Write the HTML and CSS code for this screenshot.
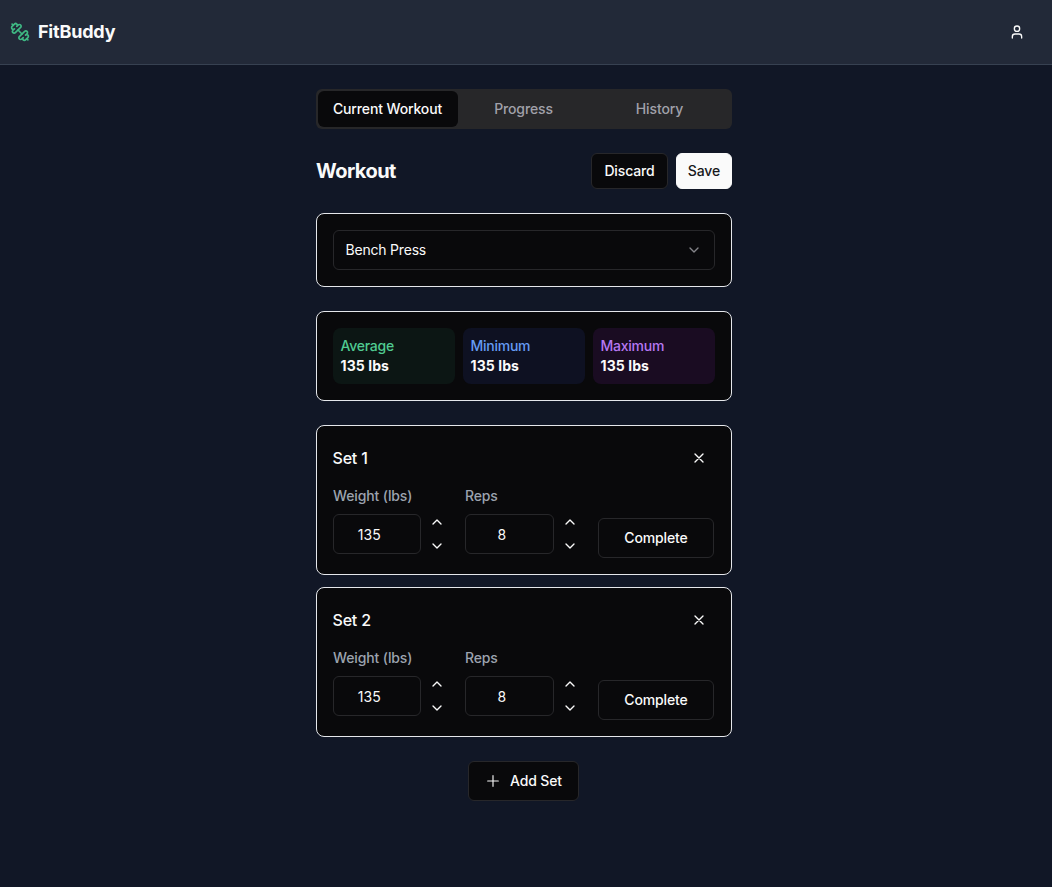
FILE: index.html
```html
<!DOCTYPE html>
<html lang="en">
<head>
<meta charset="utf-8">
<title>FitBuddy</title>
<link rel="stylesheet" href="styles.css">
</head>
<body>
<svg class="sprite" aria-hidden="true">
  <symbol id="up" viewBox="0 0 24 24"><path d="m18 15-6-6-6 6"/></symbol>
  <symbol id="down" viewBox="0 0 24 24"><path d="m6 9 6 6 6-6"/></symbol>
  <symbol id="close" viewBox="0 0 24 24"><path d="M18 6 6 18M6 6l12 12"/></symbol>
</svg>
<header class="header">
  <div class="brand">
    <svg class="logo" viewBox="0 0 24 24"><path d="M14.4 14.4 9.6 9.6"/><path d="M18.657 21.485a2 2 0 1 1-2.829-2.828l-1.767 1.768a2 2 0 1 1-2.829-2.829l6.364-6.364a2 2 0 1 1 2.829 2.829l-1.768 1.767a2 2 0 1 1 2.828 2.829z"/><path d="m21.5 21.5-1.4-1.4"/><path d="M3.9 3.9 2.5 2.5"/><path d="M6.404 12.768a2 2 0 1 1-2.829-2.829l1.768-1.767a2 2 0 1 1-2.828-2.829l2.828-2.828a2 2 0 1 1 2.829 2.828l1.767-1.768a2 2 0 1 1 2.829 2.829z"/></svg>
    <span>FitBuddy</span>
  </div>
  <svg class="icon" viewBox="0 0 24 24"><path d="M19 21v-2a4 4 0 0 0-4-4H9a4 4 0 0 0-4 4v2"/><circle cx="12" cy="7" r="4"/></svg>
</header>
<main class="main">
  <nav class="tabs">
    <button class="tab tab-active">Current Workout</button>
    <button class="tab">Progress</button>
    <button class="tab">History</button>
  </nav>
  <div class="title-row">
    <h1 class="title">Workout</h1>
    <button class="btn btn-discard">Discard</button>
    <button class="btn btn-save">Save</button>
  </div>
  <section class="card">
    <div class="select"><span>Bench Press</span><svg class="icon select-icon"><use href="#down"/></svg></div>
  </section>
  <section class="card stats">
    <div class="stat stat-green"><span class="stat-label">Average</span><strong>135 lbs</strong></div>
    <div class="stat stat-blue"><span class="stat-label">Minimum</span><strong>135 lbs</strong></div>
    <div class="stat stat-purple"><span class="stat-label">Maximum</span><strong>135 lbs</strong></div>
  </section>
  <div class="sets">
    <section class="card set">
      <div class="set-head"><h2 class="set-title">Set 1</h2><svg class="icon"><use href="#close"/></svg></div>
      <div class="set-grid">
        <div class="field"><span class="label">Weight (lbs)</span><div class="control"><div class="input">135</div><div class="stepper"><svg class="icon"><use href="#up"/></svg><svg class="icon"><use href="#down"/></svg></div></div></div>
        <div class="field"><span class="label">Reps</span><div class="control"><div class="input">8</div><div class="stepper"><svg class="icon"><use href="#up"/></svg><svg class="icon"><use href="#down"/></svg></div></div></div>
        <button class="btn btn-complete">Complete</button>
      </div>
    </section>
    <section class="card set">
      <div class="set-head"><h2 class="set-title">Set 2</h2><svg class="icon"><use href="#close"/></svg></div>
      <div class="set-grid">
        <div class="field"><span class="label">Weight (lbs)</span><div class="control"><div class="input">135</div><div class="stepper"><svg class="icon"><use href="#up"/></svg><svg class="icon"><use href="#down"/></svg></div></div></div>
        <div class="field"><span class="label">Reps</span><div class="control"><div class="input">8</div><div class="stepper"><svg class="icon"><use href="#up"/></svg><svg class="icon"><use href="#down"/></svg></div></div></div>
        <button class="btn btn-complete">Complete</button>
      </div>
    </section>
  </div>
  <button class="btn btn-add"><svg class="icon" viewBox="0 0 24 24"><path d="M4 12h16M12 4v16"/></svg>Add Set</button>
</main>
</body>
</html>
```
FILE: styles.css
```css
* { box-sizing: border-box; }
body {
  margin: 0;
  min-height: 100vh;
  background: #111726;
  color: #fafafa;
  font: 540 14px/20px Inter, "Liberation Sans", sans-serif;
  letter-spacing: -0.13px;
}
button { font: inherit; color: inherit; letter-spacing: inherit; }
.sprite { display: none; }
.icon, .logo {
  width: 16px;
  height: 16px;
  flex: none;
  fill: none;
  stroke: currentColor;
  stroke-width: 2;
  stroke-linecap: round;
  stroke-linejoin: round;
}
.header {
  display: flex;
  align-items: center;
  justify-content: space-between;
  height: 65px;
  padding: 0 27px 0 10px;
  background: #222938;
  border-bottom: 1px solid #374151;
}
.brand {
  display: flex;
  align-items: center;
  gap: 8px;
  font-size: 18px;
  line-height: 28px;
  font-weight: 700;
  letter-spacing: -0.2px;
}
.logo { width: 20px; height: 20px; color: #3fb984; }
.main {
  display: flex;
  flex-direction: column;
  gap: 24px;
  width: 416px;
  margin: 24px 0 0 316px;
}
.tabs {
  display: grid;
  grid-template-columns: repeat(3, 1fr);
  height: 40px;
  padding: 4px;
  border-radius: 6px;
  background: #272729;
}
.tab {
  padding: 0 1px 0 0;
  border: 0;
  background: none;
  color: #a1a1aa;
}
.tab-active {
  margin: -2px;
  border-radius: 6px;
  background: #09090b;
  color: #fafafa;
}
.title-row { display: flex; align-items: center; gap: 8px; height: 36px; }
.title {
  flex: 1;
  margin: 0;
  font-size: 20px;
  line-height: 28px;
  font-weight: 700;
  letter-spacing: -0.55px;
}
.btn {
  display: flex;
  align-items: center;
  justify-content: center;
  height: 40px;
  padding: 0;
  border: 1px solid #27272a;
  border-radius: 6px;
  background: #09090b;
}
.btn-discard { width: 77px; height: 36px; }
.btn-save { width: 56px; height: 36px; background: #fafafa; border-color: #fafafa; color: #18181b; }
.card {
  padding: 16px;
  border: 1px solid #e5e7eb;
  border-radius: 8px;
  background: #09090b;
}
.select {
  display: flex;
  align-items: center;
  justify-content: space-between;
  height: 40px;
  padding: 0 12px 0 11.5px;
  border: 1px solid #27272a;
  border-radius: 6px;
  font-weight: 430;
  letter-spacing: -0.2px;
}
.select-icon { color: #85858a; }
.stats { display: grid; grid-template-columns: repeat(3, 1fr); gap: 8px; }
.stat {
  display: flex;
  flex-direction: column;
  height: 56px;
  padding: 8px 8px 8px 7.5px;
  border-radius: 8px;
}
.stat-label { letter-spacing: -0.25px; }
.stat strong { font-weight: 750; letter-spacing: 0.1px; }
.stat-green { background: #0c1614; }
.stat-green .stat-label { color: #50cb91; }
.stat-blue { background: #0e1122; }
.stat-blue .stat-label { color: #659bf3; }
.stat-purple { background: #1a0c22; }
.stat-purple .stat-label { color: #b678f2; }
.sets { display: flex; flex-direction: column; gap: 12px; }
.set { height: 150px; padding-left: 15.5px; }
.set-head {
  display: flex;
  align-items: center;
  justify-content: space-between;
  height: 32px;
  padding-right: 8px;
}
.set-title { margin: 0; font-size: 16px; line-height: 24px; font-weight: 540; letter-spacing: -0.2px; }
.set-grid {
  display: grid;
  grid-template-columns: 116px 117px 116px;
  gap: 16px;
  align-items: end;
  margin: 12px 0 0 0.5px;
}
.field { padding-bottom: 4px; }
.label { display: block; margin-bottom: 8px; color: #9ca3af; }
.control { display: flex; gap: 4px; }
.input {
  display: flex;
  align-items: center;
  justify-content: center;
  flex: 1;
  height: 40px;
  padding: 2px 15.5px 0 0;
  border: 1px solid #27272a;
  border-radius: 6px;
  font-weight: 430;
  letter-spacing: 0;
}
.stepper {
  display: flex;
  flex-direction: column;
  align-items: center;
  gap: 8px;
  width: 24px;
}
.btn-add { align-self: center; width: 111px; gap: 9px; margin-right: 1px; }
.btn-add .icon { stroke-width: 1.7; }
```
